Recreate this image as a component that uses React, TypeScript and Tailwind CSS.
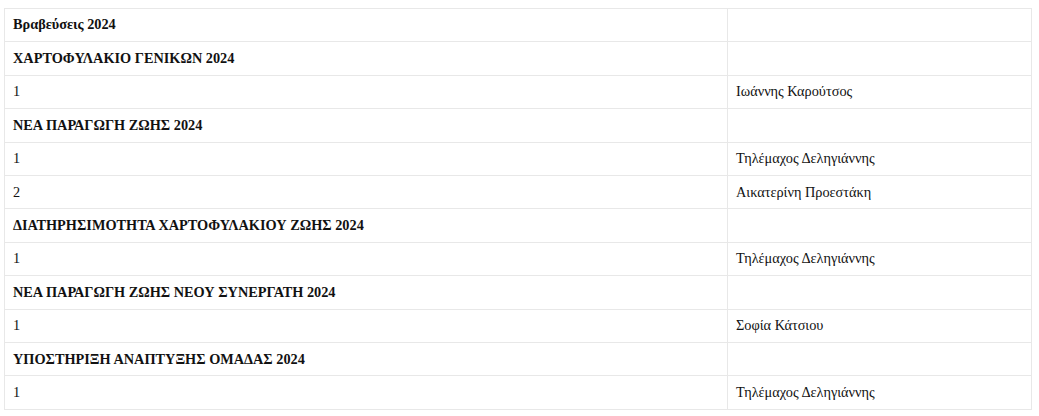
const rows: { left: string; right: string; head?: boolean }[] = [
  { left: "Βραβεύσεις 2024", right: "", head: true },
  { left: "ΧΑΡΤΟΦΥΛΑΚΙΟ ΓΕΝΙΚΩΝ 2024", right: "", head: true },
  { left: "1", right: "Ιωάννης Καρούτσος" },
  { left: "ΝΕΑ ΠΑΡΑΓΩΓΗ ΖΩΗΣ 2024", right: "", head: true },
  { left: "1", right: "Τηλέμαχος Δεληγιάννης" },
  { left: "2", right: "Αικατερίνη Προεστάκη" },
  { left: "ΔΙΑΤΗΡΗΣΙΜΟΤΗΤΑ ΧΑΡΤΟΦΥΛΑΚΙΟΥ ΖΩΗΣ 2024", right: "", head: true },
  { left: "1", right: "Τηλέμαχος Δεληγιάννης" },
  { left: "ΝΕΑ ΠΑΡΑΓΩΓΗ ΖΩΗΣ ΝΕΟΥ ΣΥΝΕΡΓΑΤΗ 2024", right: "", head: true },
  { left: "1", right: "Σοφία Κάτσιου" },
  { left: "ΥΠΟΣΤΗΡΙΞΗ ΑΝΑΠΤΥΞΗΣ ΟΜΑΔΑΣ 2024", right: "", head: true },
  { left: "1", right: "Τηλέμαχος Δεληγιάννης" },
];

export default function App() {
  return (
    <div className="bg-white w-[1039px] h-[416px] pt-[8px] pl-[4px] font-['Liberation_Serif',serif] text-[14.3px] text-[#111]">
      <table className="w-[1028px] border-collapse table-fixed">
        <colgroup>
          <col className="w-[723px]" />
          <col />
        </colgroup>
        <tbody>
          {rows.map((r, i) => (
            <tr key={i} className="h-[33.42px]">
              <td className={`border border-[#e8e8e8] px-2 py-0 align-middle ${r.head ? "font-bold" : ""}`}>
                {r.left}
              </td>
              <td className="border border-[#e8e8e8] px-2 py-0 align-middle">{r.right}</td>
            </tr>
          ))}
        </tbody>
      </table>
    </div>
  );
}
